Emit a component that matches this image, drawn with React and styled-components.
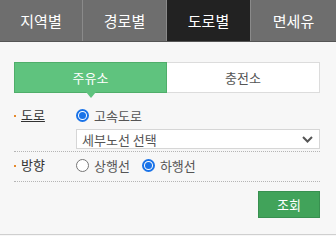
import { useState } from 'react';
import styled, { createGlobalStyle } from 'styled-components';

const GlobalStyle = createGlobalStyle`
  html, body {
    margin: 0;
    padding: 0;
    background: #f7f7f7;
  }
  body {
    font-family: "Noto Sans CJK KR", "Noto Sans", sans-serif;
  }
`;

const Wrap = styled.div`
  width: 336px;
  height: 234px;
  border-bottom: 1px solid #cfcfcf;
  background: #f7f7f7;
`;

const TabBar = styled.div`
  display: grid;
  grid-template-columns: 82px 84px 84px 1fr;
  height: 41px;
  background: #6e6e6e;
  border-bottom: 1px solid #555;
`;

const Tab = styled.div`
  display: flex;
  align-items: center;
  justify-content: center;
  color: #fff;
  font-size: 15px;
  background: ${p => (p.$active ? '#222' : '#6e6e6e')};
  border-left: ${p => (p.$first ? 'none' : '1px solid #8a8a8a')};
`;

const Body = styled.div`
  padding: 20px 16px 0 14px;
`;

const Segment = styled.div`
  display: grid;
  grid-template-columns: 1fr 1fr;
  height: 31px;
`;

const SegButton = styled.div`
  position: relative;
  display: flex;
  align-items: center;
  justify-content: center;
  font-size: 13px;
  color: ${p => (p.$active ? '#fff' : '#555')};
  background: ${p => (p.$active ? '#5fc37e' : '#fff')};
  border: 1px solid ${p => (p.$active ? '#4fae6a' : '#dcdcdc')};
  border-left: ${p => (p.$active ? undefined : 'none')};

  ${p =>
    p.$active &&
    `
    &::after {
      content: '';
      position: absolute;
      left: 50%;
      bottom: -6px;
      margin-left: -5px;
      border-left: 5px solid transparent;
      border-right: 5px solid transparent;
      border-top: 6px solid #5fc37e;
    }
  `}
`;

const Row = styled.div`
  display: flex;
  align-items: flex-start;
  padding: ${p => p.$pad};
  border-bottom: 1px dotted #b5b5b5;
`;

const Label = styled.div`
  position: relative;
  width: 62px;
  padding-left: 7px;
  font-size: 13px;
  line-height: 20px;
  color: #333;
  box-sizing: border-box;

  &::before {
    content: '';
    position: absolute;
    left: 0;
    top: 10px;
    width: 2px;
    height: 2px;
    background: #e58a2e;
  }

  span {
    text-decoration: ${p => (p.$underline ? 'underline' : 'none')};
  }
`;

const Field = styled.div`
  flex: 1;
  display: flex;
  flex-direction: column;
  gap: 4px;
`;

const RadioGroup = styled.div`
  display: flex;
  align-items: center;
  gap: 12px;
  height: 20px;
`;

const RadioItem = styled.label`
  display: flex;
  align-items: center;
  gap: 5px;
  font-size: 13px;
  color: #555;
`;

const Circle = styled.span`
  box-sizing: border-box;
  width: 13px;
  height: 13px;
  border-radius: 50%;
  border: ${p => (p.$on ? '2px solid #1a73e8' : '1px solid #767676')};
  background: #fff;
  display: flex;
  align-items: center;
  justify-content: center;

  &::after {
    content: '';
    width: 7px;
    height: 7px;
    border-radius: 50%;
    background: ${p => (p.$on ? '#1a73e8' : 'transparent')};
  }
`;

const Select = styled.div`
  display: flex;
  align-items: center;
  justify-content: space-between;
  height: 18px;
  padding: 0 6px 0 5px;
  background: #fff;
  border: 1px solid #d6d6d6;
  font-size: 13px;
  color: #555;
`;

const Footer = styled.div`
  display: flex;
  justify-content: flex-end;
  padding-top: 9px;
`;

const Button = styled.button`
  width: 62px;
  height: 27px;
  background: #41a35a;
  border: 1px solid #389050;
  color: #fff;
  font-family: inherit;
  font-size: 13px;
  padding: 0;
`;

const Radio = ({ on, children, onClick }) => (
  <RadioItem onClick={onClick}>
    <Circle $on={on} />
    {children}
  </RadioItem>
);

export default function App() {
  const [dir, setDir] = useState('down');
  const tabs = ['지역별', '경로별', '도로별', '면세유'];
  return (
    <>
      <GlobalStyle />
      <Wrap>
        <TabBar>
          {tabs.map((t, i) => (
            <Tab key={t} $active={i === 2} $first={i === 0}>
              {t}
            </Tab>
          ))}
        </TabBar>
        <Body>
          <Segment>
            <SegButton $active>주유소</SegButton>
            <SegButton>충전소</SegButton>
          </Segment>
          <Row $pad="12px 0 2px">
            <Label $underline>
              <span>도로</span>
            </Label>
            <Field>
              <RadioGroup>
                <Radio on>고속도로</Radio>
              </RadioGroup>
              <Select>
                세부노선 선택
                <svg width="11" height="7" viewBox="0 0 11 7">
                  <path d="M1 1l4.5 4.5L10 1" fill="none" stroke="#555" strokeWidth="2" />
                </svg>
              </Select>
            </Field>
          </Row>
          <Row $pad="3px 0 6px">
            <Label>
              <span>방향</span>
            </Label>
            <Field>
              <RadioGroup>
                <Radio on={dir === 'up'} onClick={() => setDir('up')}>상행선</Radio>
                <Radio on={dir === 'down'} onClick={() => setDir('down')}>하행선</Radio>
              </RadioGroup>
            </Field>
          </Row>
          <Footer>
            <Button>조회</Button>
          </Footer>
        </Body>
      </Wrap>
    </>
  );
}
